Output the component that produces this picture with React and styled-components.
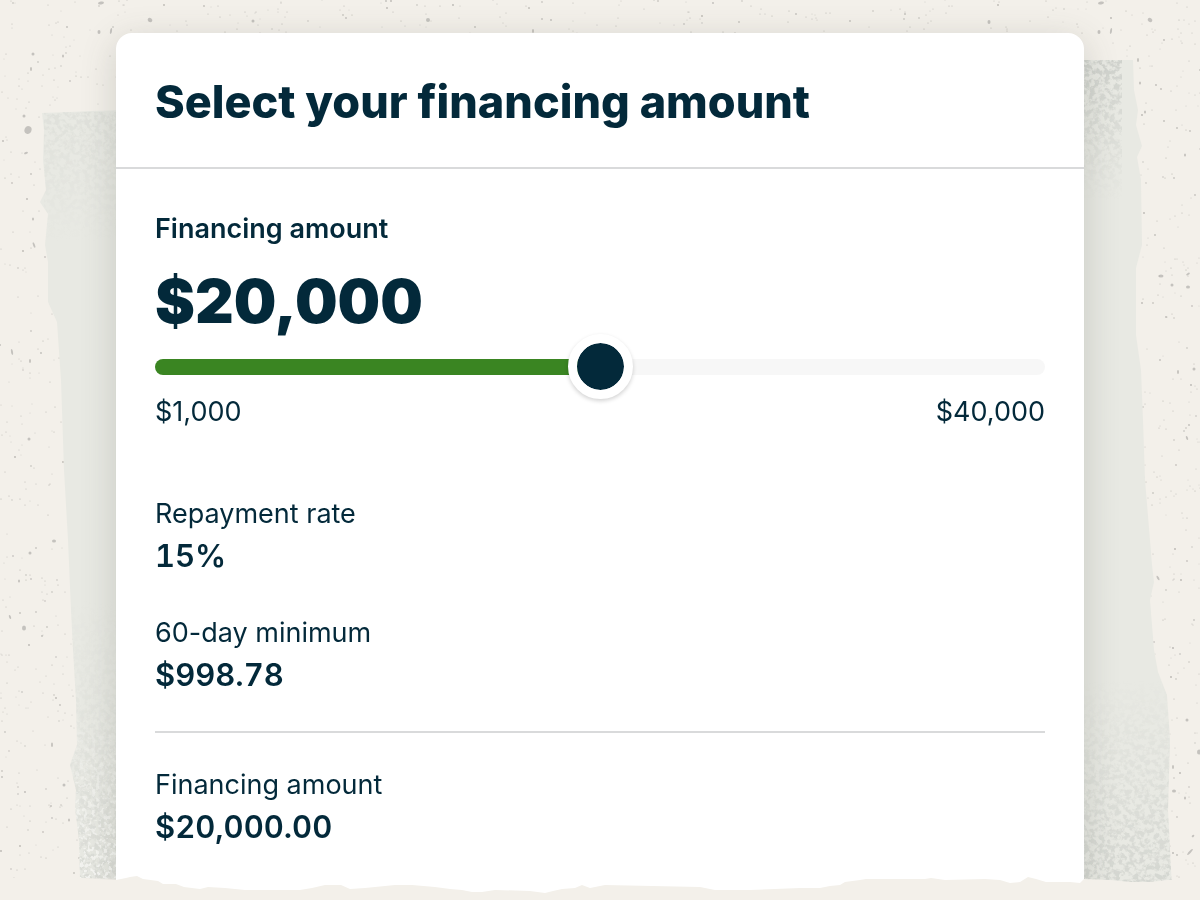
import { useState } from "react";
import styled, { createGlobalStyle } from "styled-components";

const ink = "#03293a";
const paper = "#f3f0ea";

const GlobalStyle = createGlobalStyle`
  * {
    box-sizing: border-box;
  }

  body {
    margin: 0;
    background-color: ${paper};
    color: ${ink};
    font-family: Inter, "Liberation Sans", sans-serif;
  }
`;

const Page = styled.div`
  position: relative;
  min-height: 100vh;
  padding: 33px 16px 0;
  display: flex;
  flex-direction: column;
  align-items: center;
  overflow: hidden;
`;

const Texture = styled.svg`
  position: absolute;
  top: 0;
  left: 0;
  width: 100%;
  height: 100%;
`;

const TornEdge = styled.svg`
  position: absolute;
  left: 0;
  bottom: 0;
  width: 100%;
  height: 30px;
  pointer-events: none;
`;

const Card = styled.main`
  position: relative;
  flex: 1;
  width: 100%;
  max-width: 968px;
  padding-bottom: 12px;
  background-color: white;
  border-radius: 16px 16px 0 0;
  box-shadow: 0 8px 36px rgba(70, 75, 65, 0.2);
`;

const Header = styled.header`
  padding: 40px 39px 36px;
  border-bottom: 2px solid #d9dadb;
`;

const Title = styled.h1`
  margin: 0;
  font-size: 45px;
  line-height: 58px;
  font-weight: 800;
`;

const Content = styled.div`
  padding: 42px 39px 0;
`;

const AmountLabel = styled.label`
  display: block;
  font-size: 27px;
  line-height: 36px;
  font-weight: 600;
`;

const Amount = styled.output`
  display: block;
  margin-top: 14px;
  font-size: 60px;
  line-height: 80px;
  font-weight: 900;
`;

const Slider = styled.input`
  appearance: none;
  display: block;
  width: 100%;
  height: 65px;
  margin: -7px 0 -5px;
  background: transparent;
  cursor: pointer;

  &::-webkit-slider-runnable-track {
    height: 16px;
    border-radius: 8px;
    background: linear-gradient(
      to right,
      #3a8522 var(--filled),
      #f7f7f7 var(--filled)
    );
  }

  &::-webkit-slider-thumb {
    appearance: none;
    width: 65px;
    height: 65px;
    margin-top: -25px;
    border: 9px solid white;
    border-radius: 50%;
    background: ${ink} padding-box;
    box-shadow: 0 2px 4px rgba(0, 0, 0, 0.18);
  }
`;

const Limits = styled.div`
  display: flex;
  justify-content: space-between;
  font-size: 27px;
  line-height: 36px;
`;

const Terms = styled.dl`
  margin: 0;
  padding: ${(props) => props.$top}px 0 34px;
  display: grid;
  gap: 37px;
  border-bottom: ${(props) => (props.$ruled ? "2px solid #d9dadb" : "none")};
`;

const Term = styled.dt`
  font-size: 27px;
  line-height: 36px;
`;

const Value = styled.dd`
  margin: 2px 0 0;
  font-size: 31px;
  line-height: 44px;
  font-weight: 600;
  font-variant-numeric: tabular-nums;
`;

// small seeded generator, so the specks stay put between renders
const random = (seed) => () => {
  seed = (seed * 16807) % 2147483647;
  return seed / 2147483647;
};

const makeSpecks = (count, seed) => {
  const next = random(seed);
  return Array.from({ length: count }, () => ({
    x: Math.round(next() * 1200),
    y: Math.round(next() * 878),
    r: next() > 0.8 ? 0.9 : 0.6,
    shade: 0.2 + next() * 0.3,
  }));
};

const specks = makeSpecks(5200, 41);

const flakes = [
  [101, 3, 3, 1.5, -10], [150, 20, 2.5, 2, 40], [99, 32, 1.5, 2, 0],
  [111, 31, 1, 3, 10], [28, 130, 3.5, 4, 20], [24, 116, 1.5, 1.5, 0],
  [33, 54, 1.5, 1.5, 0], [63, 56, 1, 1.5, 0], [31, 69, 1, 2, 0],
  [26, 153, 2, 1, -20], [33, 219, 1, 1.5, 0], [34, 245, 1, 3, -20],
  [253, 21, 1.5, 1.5, 0], [12, 352, 1, 3, -10], [30, 361, 1, 2, 0],
  [29, 439, 1.5, 1.5, 0], [54, 541, 2, 1.5, 0], [30, 553, 1.5, 1.5, 0],
  [19, 581, 1, 1.5, 0], [10, 617, 1, 2, -20], [24, 628, 2, 2.5, 0],
  [52, 745, 1, 2, 0], [64, 785, 1.5, 1.5, 0], [69, 820, 1, 1.5, 0],
  [428, 20, 2, 2, 0], [533, 31, 1, 2, 0], [989, 22, 1.5, 2, 0],
  [1101, 3, 3, 1.5, -10], [1150, 20, 2.5, 2, 40], [1099, 32, 1.5, 2, 0],
  [1111, 31, 1, 3, 10], [1138, 60, 1, 2, 0], [1140, 83, 1, 1.5, 0],
  [1145, 112, 1, 1.5, 0], [1185, 155, 1, 1.5, 0], [1161, 276, 2.5, 1.5, 0],
  [1172, 285, 1.5, 1.5, 0], [1188, 274, 2, 1, -30], [1188, 287, 2, 1.5, 0],
  [1178, 372, 1, 2, 0], [1194, 369, 1.5, 1.5, 0], [1187, 438, 1, 2, -20],
  [1158, 578, 1, 2.5, -30],
  [1187, 720, 1.5, 1.5, 0], [1199, 752, 2, 2.5, 0], [1173, 767, 1, 2, 0],
  [1174, 791, 2, 1.5, 0], [1185, 798, 1, 1.5, 0], [1190, 852, 4, 1, -48],
  [1193, 836, 1.5, 1, -45],
];

const leftBrush =
  "M42 113L70 112L90 111L130 110V879L80 878L79 840L75 808L76 790L70 765L77 745L76 700L73 650L71 610L68 540L64 470L61 380L57 322L48 302L48 262L45 245L48 214L40 202L46 190L43 160L44 130Z";
const rightBrush =
  "M1070 60L1133 60L1134 90L1138 110L1136 125L1142 146L1137 157L1141 180L1142 245L1136 268L1136 335L1141 370L1143 420L1145 480L1150 540L1152 565L1154 582L1150 600L1154 650L1158 672L1167 695L1170 740L1168 810L1170 850L1172 888L1169 880L1150 883L1110 881L1070 879Z";

const Background = () => (
  <Texture viewBox="0 0 1200 900" preserveAspectRatio="xMidYMin slice" aria-hidden="true">
    <defs>
      <filter id="dark" x="0" y="0" width="100%" height="100%" colorInterpolationFilters="sRGB">
        <feTurbulence type="fractalNoise" baseFrequency="0.2" numOctaves="3" seed="7" />
        <feColorMatrix values="0 0 0 0 0.79  0 0 0 0 0.8  0 0 0 0 0.78  5 0 0 0 -2.1" />
        <feComposite in2="SourceGraphic" operator="in" />
      </filter>
      <filter id="light" x="0" y="0" width="100%" height="100%" colorInterpolationFilters="sRGB">
        <feTurbulence type="fractalNoise" baseFrequency="0.25" numOctaves="3" seed="3" />
        <feColorMatrix values="0 0 0 0 0.98  0 0 0 0 0.98  0 0 0 0 0.97  8 0 0 0 -4.2" />
        <feComposite in2="SourceGraphic" operator="in" />
      </filter>
      <linearGradient id="fadeDown" x1="0" y1="0" x2="0" y2="1">
        <stop offset="0" stopColor="white" stopOpacity="0.8" />
        <stop offset="1" stopColor="white" stopOpacity="0" />
      </linearGradient>
      <linearGradient id="fadeUp" x1="0" y1="0" x2="0" y2="1">
        <stop offset="0" stopColor="white" stopOpacity="0" />
        <stop offset="1" stopColor="white" stopOpacity="0.8" />
      </linearGradient>
      <mask id="top" maskUnits="userSpaceOnUse" x="0" y="0" width="1200" height="900">
        <rect x="44" y="112" width="80" height="130" fill="url(#fadeDown)" opacity="0.35" />
        <rect x="1070" y="60" width="52" height="140" fill="url(#fadeDown)" />
      </mask>
      <mask id="bottom" maskUnits="userSpaceOnUse" x="0" y="0" width="1200" height="900">
        <rect x="70" y="600" width="60" height="280" fill="url(#fadeUp)" opacity="0.5" />
        <rect x="1070" y="680" width="110" height="205" fill="url(#fadeUp)" opacity="0.8" />
      </mask>
      <mask id="chalk" maskUnits="userSpaceOnUse" x="0" y="0" width="1200" height="900">
        <rect x="70" y="700" width="60" height="180" fill="url(#fadeUp)" />
      </mask>
    </defs>
    <rect width="1200" height="900" fill={paper} />
    {specks.map((speck, i) => (
      <circle key={i} cx={speck.x} cy={speck.y} r={speck.r} fill="#7d7b78" opacity={speck.shade} />
    ))}
    {flakes.map(([x, y, rx, ry, turn], i) => (
      <ellipse
        key={i}
        cx={x}
        cy={y}
        rx={rx}
        ry={ry}
        fill="#a5a3a0"
        opacity="0.6"
        transform={`rotate(${turn} ${x} ${y})`}
      />
    ))}
    <path d={leftBrush} fill="#e8e9e3" />
    <path d={rightBrush} fill="#e8e9e3" />
    <g mask="url(#top)">
      <path d={leftBrush} filter="url(#dark)" />
      <path d={rightBrush} filter="url(#dark)" />
    </g>
    <g mask="url(#bottom)">
      <path d={leftBrush} filter="url(#dark)" />
      <path d={rightBrush} filter="url(#dark)" />
    </g>
    <g mask="url(#chalk)">
      <path d={leftBrush} filter="url(#light)" />
    </g>
  </Texture>
);

const BottomEdge = () => (
  <TornEdge viewBox="0 870 1200 30" preserveAspectRatio="none" aria-hidden="true">
    <path
      d="M0 900V878L76 878L116 880L126 878L130 877L137 876L143 879L158 881L163 884L176 884L184 887L200 889L208 887L225 888L245 890L300 890L312 888L325 885L341 885L350 889L365 888L395 885L412 885L435 887L450 889L462 890L472 892L482 892L495 890L530 891L545 893L553 891L562 889L575 888L582 885L590 888L605 885L700 887L715 890L750 890L800 888L820 888L830 886L840 885L845 882L860 880L866 879L925 879L931 878L945 880L985 879L1000 880L1010 883L1020 882L1028 877L1036 879L1046 882L1070 882L1080 883L1084 879L1110 880L1130 882L1150 882L1169 880L1200 880V900Z"
      fill={paper}
    />
  </TornEdge>
);

const dollars = (amount, digits = 0) =>
  amount.toLocaleString("en-US", {
    style: "currency",
    currency: "USD",
    minimumFractionDigits: digits,
    maximumFractionDigits: digits,
  });

const smallest = 1000;
const largest = 40000;

const App = () => {
  const [position, setPosition] = useState(20000);
  const amount = Math.max(position, smallest);

  return (
    <>
      <GlobalStyle />
      <Page>
        <Background />
        <Card>
          <Header>
            <Title>Select your financing amount</Title>
          </Header>
          <Content>
            <AmountLabel htmlFor="amount">Financing amount</AmountLabel>
            <Amount htmlFor="amount">{dollars(amount)}</Amount>
            <Slider
              id="amount"
              type="range"
              min={0}
              max={largest}
              step={500}
              value={position}
              onChange={(e) => setPosition(Number(e.target.value))}
              style={{ "--filled": `${(position / largest) * 100}%` }}
            />
            <Limits>
              <span>{dollars(smallest)}</span>
              <span>{dollars(largest)}</span>
            </Limits>
            <Terms $top={66} $ruled>
              <div>
                <Term>Repayment rate</Term>
                <Value>15%</Value>
              </div>
              <div>
                <Term>60-day minimum</Term>
                <Value>$998.78</Value>
              </div>
            </Terms>
            <Terms $top={34}>
              <div>
                <Term>Financing amount</Term>
                <Value>{dollars(amount, 2)}</Value>
              </div>
            </Terms>
          </Content>
        </Card>
        <BottomEdge />
      </Page>
    </>
  );
};

export default App;
